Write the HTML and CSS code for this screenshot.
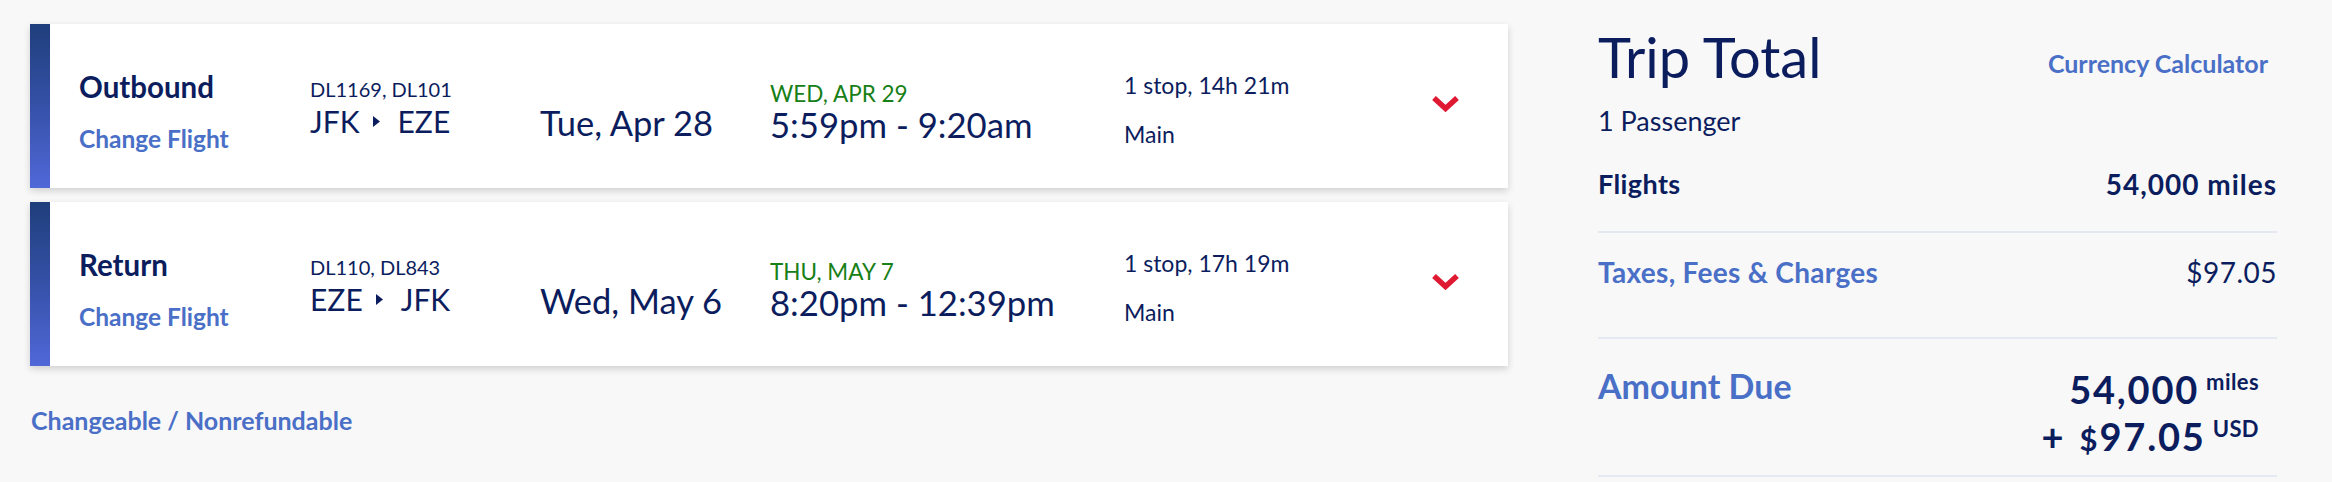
FILE: index.html
```html
<!DOCTYPE html>
<html lang="en">
<head>
<meta charset="utf-8">
<title>Trip Summary</title>
<link rel="stylesheet" href="styles.css">
</head>
<body>
<div class="page">
  <div class="flights">
    <div class="card">
      <div class="bar"></div>
      <div class="col c-dir">
        <div class="dir">Outbound</div>
        <a class="link change">Change Flight</a>
      </div>
      <div class="col c-route">
        <div class="fno">DL1169, DL101</div>
        <div class="route"><span>JFK</span><svg class="tri" viewBox="0 0 7 11" width="7" height="11"><polygon points="0,0 7,5.5 0,11" fill="#0c1d5e"/></svg><span>EZE</span></div>
      </div>
      <div class="col c-date">
        <div class="date">Tue, Apr 28</div>
      </div>
      <div class="col c-time">
        <div class="arr">WED, APR 29</div>
        <div class="time">5:59pm - 9:20am</div>
      </div>
      <div class="col c-stop">
        <div class="stop">1 stop, 14h 21m</div>
        <div class="cabin">Main</div>
      </div>
      <div class="col c-chev">
        <svg class="chev" viewBox="0 0 27 16" width="27" height="16"><polyline points="2,2 13.5,12.5 25,2" fill="none" stroke="#e01933" stroke-width="5.5"/></svg>
      </div>
    </div>
    <div class="card">
      <div class="bar"></div>
      <div class="col c-dir">
        <div class="dir">Return</div>
        <a class="link change">Change Flight</a>
      </div>
      <div class="col c-route">
        <div class="fno">DL110, DL843</div>
        <div class="route"><span>EZE</span><svg class="tri" viewBox="0 0 7 11" width="7" height="11"><polygon points="0,0 7,5.5 0,11" fill="#0c1d5e"/></svg><span>JFK</span></div>
      </div>
      <div class="col c-date">
        <div class="date">Wed, May 6</div>
      </div>
      <div class="col c-time">
        <div class="arr">THU, MAY 7</div>
        <div class="time">8:20pm - 12:39pm</div>
      </div>
      <div class="col c-stop">
        <div class="stop">1 stop, 17h 19m</div>
        <div class="cabin">Main</div>
      </div>
      <div class="col c-chev">
        <svg class="chev" viewBox="0 0 27 16" width="27" height="16"><polyline points="2,2 13.5,12.5 25,2" fill="none" stroke="#e01933" stroke-width="5.5"/></svg>
      </div>
    </div>
    <a class="link policy">Changeable / Nonrefundable</a>
  </div>

  <div class="total">
    <div class="head">
      <div class="title">Trip Total</div>
      <a class="link calc">Currency Calculator</a>
    </div>
    <div class="pax">1 Passenger</div>
    <div class="row r-flights">
      <span class="lbl">Flights</span>
      <span class="val">54,000 miles</span>
    </div>
    <div class="row r-taxes">
      <a class="link tlbl">Taxes, Fees &amp; Charges</a>
      <span class="tval">$97.05</span>
    </div>
    <div class="row r-due">
      <span class="link dlbl">Amount Due</span>
      <div class="due">
        <div class="dline"><span class="big">54,000</span><span class="sup">miles</span></div>
        <div class="dline"><span class="plus">+</span><span class="big"><span class="dollar">$</span>97.05</span><span class="sup">USD</span></div>
      </div>
    </div>
  </div>
</div>
</body>
</html>
```

FILE: styles.css
```css
* { box-sizing: border-box; }
html, body { margin: 0; padding: 0; }
body {
  background: #f8f8f8;
  font-family: "Lato", "Open Sans", sans-serif;
  color: #0c1d5e;
  width: 2332px;
  height: 482px;
  overflow: hidden;
}
.page {
  display: flex;
  padding: 24px 0 0 30px;
}
.flights {
  width: 1478px;
  flex: none;
  display: flex;
  flex-direction: column;
}
.card {
  display: flex;
  height: 164px;
  background: #fff;
  box-shadow: 0 3px 7px rgba(0, 0, 0, 0.16);
  margin-bottom: 14px;
}
.bar {
  width: 20px;
  flex: none;
  background: linear-gradient(180deg, #1f3e7b 0%, #3551a8 50%, #5068d8 100%);
}
.col { display: flex; flex-direction: column; line-height: 1.2; flex: none; }
.link { color: #4a6fc7; font-weight: 700; text-decoration: none; }

.c-dir { width: 260px; padding: 45px 0 0 29px; }
.dir { font-size: 29.5px; font-weight: 700; }
.change { font-size: 24.5px; margin-top: 20px; }

.c-route { width: 230px; padding-top: 53px; }
.fno { font-size: 20px; }
.route { font-size: 30px; margin-top: 2px; display: flex; align-items: center; }
.tri { margin: 1px 18px 0 13px; }

.c-date { width: 230px; padding-top: 78px; }
.date { font-size: 34.5px; }

.c-time { width: 354px; padding-top: 56px; }
.arr { font-size: 22.5px; color: #178016; }
.time { font-size: 34.7px; margin-top: -3px; }

.c-stop { width: 308px; padding-top: 48px; }
.stop { font-size: 23px; }
.cabin { font-size: 23px; margin-top: 21px; }

.c-chev { padding-top: 72px; }
.chev { display: block; }

.policy { font-size: 25px; line-height: 1.2; margin: 25px 0 0 1px; }

.total {
  margin-left: 90px;
  width: 679px;
  flex: none;
  line-height: 1.2;
}
.head { display: flex; justify-content: space-between; align-items: flex-start; }
.title { font-size: 56px; margin-top: -1px; }
.calc { font-size: 25px; margin: 24px 9px 0 0; }
.pax { font-size: 27px; margin-top: 15px; }
.row {
  display: flex;
  justify-content: space-between;
  align-items: flex-start;
  border-bottom: 2px solid #e4e8f1;
}
.r-flights { padding: 30px 0 30px; font-weight: 700; }
.lbl { font-size: 27px; letter-spacing: 0.4px; }
.val { font-size: 28px; letter-spacing: 1px; }
.r-taxes { padding: 23px 0 47px; }
.tlbl { font-size: 28px; letter-spacing: 0.3px; }
.tval { font-size: 28px; letter-spacing: 0.5px; }
.r-due { padding: 27px 0 12px; }
.dlbl { font-size: 34px; }
.due { display: flex; flex-direction: column; align-items: flex-end; padding-right: 18px; margin-top: 0; }
.dline { display: flex; align-items: flex-start; line-height: 47px; }
.big { font-size: 38px; font-weight: 700; letter-spacing: 1.8px; }
.dollar { font-size: 31px; letter-spacing: 2px; }
.sup { font-size: 22px; font-weight: 700; margin-left: 7px; line-height: 32px; letter-spacing: 0.4px; }
.plus { font-size: 38px; font-weight: 700; margin-right: 16px; }
```
